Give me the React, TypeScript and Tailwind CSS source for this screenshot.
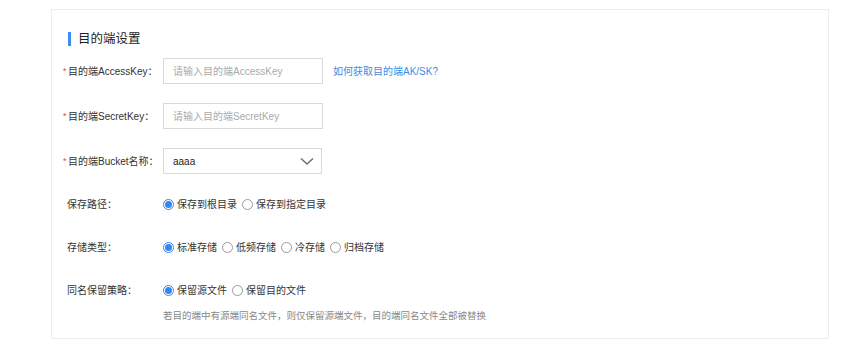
import { ReactNode } from "react";

const FONT = {
  fontFamily: '"Liberation Sans", "Noto Sans CJK SC", sans-serif',
};

type RowProps = {
  label: string;
  required?: boolean;
  children: ReactNode;
  className?: string;
};

function FormRow({ label, required = false, children, className = "" }: RowProps) {
  return (
    <div className={`flex items-center h-[26px] ${className}`}>
      <div className="w-[100px] shrink-0 flex items-center text-[10px] text-[#333]">
        {required ? (
          <span className="w-[5px] text-[#f04134] text-[9px] leading-none">*</span>
        ) : (
          <span className="w-[4px]" />
        )}
        <span>{label}：</span>
      </div>
      {children}
    </div>
  );
}

function TextInput({ placeholder }: { placeholder: string }) {
  return (
    <input
      type="text"
      placeholder={placeholder}
      className="w-[160px] h-[26px] border border-[#d9d9d9] px-[9px] text-[10px] text-[#333] placeholder:text-[#aaa] outline-none"
      style={FONT}
    />
  );
}

function Radio({ label, checked = false }: { label: string; checked?: boolean }) {
  return (
    <label className="flex items-center mr-[5px] cursor-pointer">
      <span
        className={
          checked
            ? "w-[11px] h-[11px] rounded-full border border-[#3388f0] flex items-center justify-center"
            : "w-[11px] h-[11px] rounded-full border border-[#9a9a9a] bg-white"
        }
      >
        {checked && <span className="w-[7px] h-[7px] rounded-full bg-[#3388f0]" />}
      </span>
      <span className="ml-[3px] text-[10px] text-[#333]">{label}</span>
    </label>
  );
}

export default function App() {
  return (
    <div className="w-[850px] h-[348px] bg-white pt-[9px]" style={FONT}>
      <div className="ml-[51px] w-[778px] h-[330px] border border-[#ececec] bg-white pt-[22px] pl-[11px]">
        <div className="flex items-center h-[14px] pl-[5px]">
          <span className="w-[3px] h-[14px] bg-[#3a8ef0]" />
          <span className="ml-[7px] text-[12.5px] text-[#222]">目的端设置</span>
        </div>

        <FormRow label="目的端AccessKey" required className="mt-[12px]">
          <TextInput placeholder="请输入目的端AccessKey" />
          <a href="#" className="ml-[10px] text-[10px] text-[#3a8ee6]">
            如何获取目的端AK/SK?
          </a>
        </FormRow>

        <FormRow label="目的端SecretKey" required className="mt-[19px]">
          <TextInput placeholder="请输入目的端SecretKey" />
        </FormRow>

        <FormRow label="目的端Bucket名称" required className="mt-[19px]">
          <div className="w-[159px] h-[26px] border border-[#d9d9d9] flex items-center justify-between pl-[9px] pr-[7px]">
            <span className="text-[10px] text-[#222]">aaaa</span>
            <svg width="14" height="9" viewBox="0 0 14 9" fill="none">
              <path d="M1 1.5 L7 7 L13 1.5" stroke="#707070" strokeWidth="1.6" />
            </svg>
          </div>
        </FormRow>

        <FormRow label="保存路径" className="mt-[17px]">
          <Radio label="保存到根目录" checked />
          <Radio label="保存到指定目录" />
        </FormRow>

        <FormRow label="存储类型" className="mt-[17px]">
          <Radio label="标准存储" checked />
          <Radio label="低频存储" />
          <Radio label="冷存储" />
          <Radio label="归档存储" />
        </FormRow>

        <FormRow label="同名保留策略" className="mt-[17px]">
          <Radio label="保留源文件" checked />
          <Radio label="保留目的文件" />
        </FormRow>

        <p className="mt-[6px] ml-[100px] h-[14px] leading-[14px] text-[9.5px] text-[#888]">
          若目的端中有源端同名文件，则仅保留源端文件，目的端同名文件全部被替换
        </p>
      </div>
    </div>
  );
}
